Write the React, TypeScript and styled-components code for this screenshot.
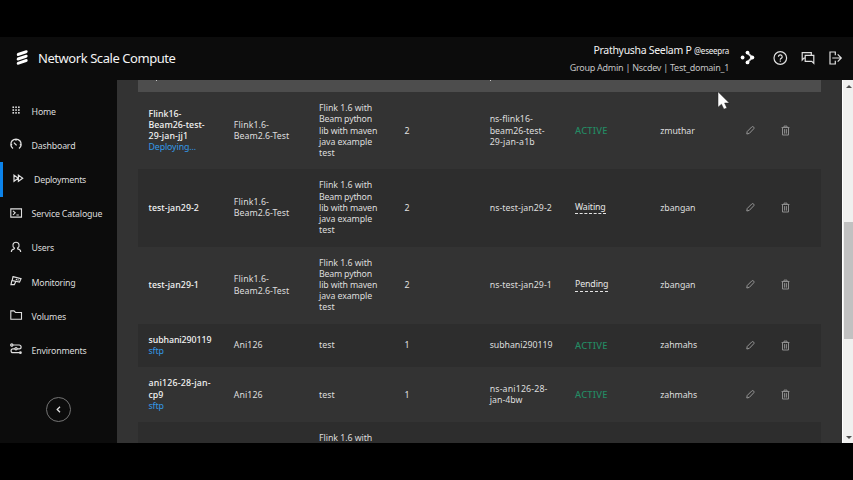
import React from "react";
import styled, { createGlobalStyle, css } from "styled-components";

const GlobalStyle = createGlobalStyle`
  * { box-sizing: border-box; }
  html, body { margin: 0; padding: 0; background: #000; overflow: hidden; }
  body { font-family: "Noto Sans", "Open Sans", sans-serif; color: #e2e2e2; }
`;

const Screen = styled.div`
  width: 853px;
  height: 480px;
  padding: 37px 0;
  display: flex;
  flex-direction: column;
  background: #000;
  position: relative;
  overflow: hidden;
`;

const Header = styled.header`
  height: 43px;
  flex: none;
  display: flex;
  align-items: center;
  padding: 0 11px 2px 16px;
  background: #0c0c0c;
`;

const Title = styled.h1`
  margin: 0 auto 0 9px;
  font-size: 13px;
  line-height: 18px;
  font-weight: 400;
  letter-spacing: -0.44px;
  color: #f4f4f4;
`;

const Account = styled.div`
  display: flex;
  flex-direction: column;
  align-items: flex-end;
  margin-right: 11px;
  padding-top: 3px;
`;

const UserName = styled.div`
  font-size: 10.5px;
  line-height: 17px;
  letter-spacing: -0.3px;
  color: #f2f2f2;
  white-space: nowrap;
`;

const Handle = styled.span`
  font-size: 8px;
  letter-spacing: -0.24px;
`;

const Role = styled.div`
  font-size: 9px;
  line-height: 17px;
  letter-spacing: -0.26px;
  color: #c4c4c4;
  white-space: nowrap;
`;

const HeaderIcons = styled.div`
  display: flex;
  align-items: center;
  gap: 13.3px;
`;

const NodesSlot = styled.div`
  display: flex;
  margin-right: 5px;
`;

const Body = styled.div`
  flex: 1;
  min-height: 0;
  display: flex;
`;

const Sidebar = styled.nav`
  width: 117px;
  flex: none;
  display: flex;
  flex-direction: column;
  background: #0c0c0c;
  padding-top: 14px;
`;

const NavItem = styled.div<{ $active?: boolean }>`
  height: 34.2px;
  flex: none;
  display: flex;
  align-items: center;
  gap: ${(p) => (p.$active ? "10px" : "9.6px")};
  padding-left: ${(p) => (p.$active ? "9px" : "10px")};
  border-left: ${(p) => (p.$active ? "3px solid #0c83ea" : "0")};
`;

const NavLabel = styled.span<{ $spacing: number }>`
  padding-top: 1px;
  font-size: 8.8px;
  line-height: 12px;
  letter-spacing: ${(p) => p.$spacing}px;
  color: #dcdcdc;
  white-space: nowrap;
`;

const CollapseButton = styled.button`
  width: 25px;
  height: 25px;
  margin: 29px 0 0 46px;
  padding: 0;
  display: flex;
  align-items: center;
  justify-content: center;
  border: 1px solid #747474;
  border-radius: 50%;
  background: transparent;
`;

const Content = styled.main`
  flex: 1;
  min-width: 0;
  padding-left: 21px;
  background: #333;
  overflow: hidden;
`;

const Table = styled.div`
  width: 682.5px;
  font-size: 8.8px;
  line-height: 11.2px;
`;

const columns = css`
  display: grid;
  grid-template-columns: repeat(7, 85.3px) 35.6px 1fr;
`;

const TableHead = styled.div`
  ${columns}
  height: 12.3px;
  background: #4d4d4d;
`;

const Descender = styled.i<{ $column: number; $offset: number }>`
  grid-column: ${(p) => p.$column};
  grid-row: 1;
  width: 1px;
  height: 1px;
  margin-left: ${(p) => p.$offset}px;
  background: #c8c8c8;
`;

const Row = styled.div<{ $dark: boolean }>`
  ${columns}
  align-items: center;
  padding: 10.7px 0 10.3px;
  background: ${(p) => (p.$dark ? "#2d2d2d" : "#333")};
`;

const Cell = styled.div`
  padding-left: 10.5px;
  padding-top: 0.2px;
  white-space: nowrap;
`;

const Line = styled.div<{ $spacing?: number; $bold?: boolean; $link?: boolean }>`
  letter-spacing: ${(p) => p.$spacing ?? 0}px;
  color: ${(p) => (p.$link ? "#3399e6" : p.$bold ? "#f4f4f4" : "#dedede")};
  font-weight: ${(p) => (p.$bold ? 500 : 400)};
`;

const Status = styled.span<{ $active: boolean }>`
  color: ${(p) => (p.$active ? "#248a64" : "#e8e8e8")};
  font-weight: ${(p) => (p.$active ? 500 : 400)};
  font-size: ${(p) => (p.$active ? "9.3px" : "8.8px")};
  letter-spacing: ${(p) => (p.$active ? "0.25px" : "-0.12px")};
  ${(p) => !p.$active && css`
    display: inline-block;
    border-bottom: 1px dashed #e4e4e4;
  `}
`;

const IconCell = styled.div`
  display: flex;
  padding-left: 10.6px;
  padding-bottom: 1.6px;
`;

const Scrollbar = styled.div`
  width: 11px;
  flex: none;
  display: flex;
  flex-direction: column;
  align-items: center;
  padding-left: 1px;
  border-left: 1px solid #fff;
  background: #f0f0ef;
`;

const Thumb = styled.div`
  width: 9px;
  height: 117px;
  margin: 134px 0 auto;
  background: #c1c1c1;
`;

const Arrow = styled.div<{ $down?: boolean }>`
  width: 0;
  height: 0;
  flex: none;
  margin: ${(p) => (p.$down ? "0 0 4px" : "5px 0 0")};
  border: 3px solid transparent;
  ${(p) => p.$down
    ? css`border-top: 3px solid #505050; border-bottom: 0;`
    : css`border-bottom: 3px solid #505050; border-top: 0;`}
`;

const Pointer = styled.svg`
  position: absolute;
  left: 717px;
  top: 91px;
`;

const Stroke = styled.svg`
  flex: none;
  fill: none;
  stroke: #e0e0e0;
  stroke-width: 1;
  overflow: visible;
`;

const Logo = () => (
  <svg width="13" height="15" viewBox="0 0 13 15" fill="#fff">
    <path d="M1.6 3.1 10 .3Q11.6 0 11.6 1.6 11.6 2.9 10.4 3.3L2.2 6Q.8 6.2.8 4.8.8 3.5 1.6 3.1Z" />
    <path d="M1.6 7.5 10 4.7Q11.6 4.4 11.6 6 11.6 7.3 10.4 7.7L2.2 10.4Q.8 10.6.8 9.2.8 7.9 1.6 7.5Z" />
    <path d="M1.6 11.9 10 9.1Q11.6 8.8 11.6 10.4 11.6 11.7 10.4 12.1L2.2 14.8Q.8 15 .8 13.6.8 12.3 1.6 11.9Z" />
  </svg>
);

const NodesIcon = () => (
  <Stroke width="15" height="15" viewBox="0 0 15 15">
    <path d="M7.3 2.8 12.3 7.5 7.3 12.2" strokeWidth="1.9" />
    <g fill="#fff" stroke="none">
      <circle cx="2.6" cy="7.5" r="1.9" />
      <circle cx="7.5" cy="2.6" r="1.9" />
      <circle cx="12.2" cy="7.5" r="2.1" />
      <circle cx="7.5" cy="12.4" r="1.9" />
    </g>
  </Stroke>
);

const HelpIcon = () => (
  <Stroke width="14" height="14" viewBox="0 0 14 14">
    <circle cx="7.3" cy="7" r="6.3" strokeWidth="1.2" />
    <path d="M5.4 5.7a1.9 1.9 0 1 1 2.8 1.7Q7.3 7.8 7.3 8.7M7.3 9.6v1.1" strokeWidth="1.2" />
  </Stroke>
);

const ChatIcon = () => (
  <Stroke width="14" height="14" viewBox="0 0 14 14">
    <path d="M4.1 7.2H3L1.2 9V1.7h9.1V4" strokeWidth="1.2" />
    <path d="M4.2 4.3h8.6v8l-2-2H4.2Z" strokeWidth="1.2" />
  </Stroke>
);

const LogoutIcon = () => (
  <Stroke width="14" height="14" viewBox="0 0 14 14">
    <path d="M7.3 4.2V1H2v12h5.3V9.8M4.3 7h8.8M9.7 3.4 13.3 7 9.7 10.6" strokeWidth="1.2" />
  </Stroke>
);

const dots = [3.2, 6, 8.8];

const navIcons: Record<string, React.ReactNode> = {
  Home: (
    <g fill="#e4e4e4" stroke="none">
      {dots.map((y) => dots.map((x) => <rect key={`${x}-${y}`} x={x - 0.75} y={y - 1.75} width="1.6" height="1.6" />))}
    </g>
  ),
  Dashboard: <path d="M3 9.5A5.2 5.2 0 1 1 9 9.5M6.6 6.4 3.9 3.6M6 .4v1.4M1 5.5h1.2M11 5.5H9.8" strokeWidth="1.3" />,
  Deployments: <path d="M2 2.1v6.2L6.2 5.2ZM6.4 2.1v6.2L10.7 5.2Z" strokeWidth="1.2" />,
  "Service Catalogue": <path d="M.8.9h10.7v8.2H.8ZM3 2.8l2.2 2L3 6.8M6.4 7h2.4" strokeWidth="1.1" />,
  Users: <path d="M4.4 6.900V6C1.900 4.500 2.600.3 6 .3S10.100 4.500 7.600 6V6.900Q10.700 7.500 10.700 9.900M4.400 6.900Q1.300 7.500 1.300 9.900" strokeWidth="1.100" />,
  Monitoring: <path d="M3 .7l8 2-1.500 3.400L2.200 4.500ZM1.800 4.600 1 8.700h3.300L5.800 5.500M6.600 2.900l-.4 1.200M8.300 3.300l-.4 1.400" strokeWidth="1.200" />,
  Volumes: <path d="M.8.9H4l1.500 1.600h6v6.800H.8Z" strokeWidth="1.1" />,
  Environments: (
    <g strokeWidth="1.2">
      <path d="M3 1h6.200a1.900 1.900 0 0 1 0 3.800H7M5 4.800H3a1.900 1.900 0 0 0 0 3.900h6" />
      <circle cx="1.800" cy="1" r="1.100" />
      <circle cx="6" cy="4.800" r="1.100" />
      <circle cx="10.400" cy="8.700" r=".8" fill="#e0e0e0" />
    </g>
  ),
};

const navItems = [
  { label: "Home", spacing: -0.2 },
  { label: "Dashboard", spacing: -0.2 },
  { label: "Deployments", spacing: -0.24, active: true },
  { label: "Service Catalogue", spacing: -0.17 },
  { label: "Users", spacing: -0.2 },
  { label: "Monitoring", spacing: -0.25 },
  { label: "Volumes", spacing: -0.16 },
  { label: "Environments", spacing: -0.2 },
];

const PencilIcon = () => (
  <Stroke width="9" height="9" viewBox="0 0 9 9">
    <path stroke="#969696" d="M.8 8l.4-2.500L5.800.9q1-.7 1.700 0t.4 1.700L3.300 7.400Z" />
  </Stroke>
);

const TrashIcon = () => (
  <Stroke width="9" height="9" viewBox="0 0 9 9">
    <path stroke="#8e8e8e" d="M.6 1.500h7.800M3 1.300V.1h3v1.200M1.500 1.700v7.300h6V1.700M3.600 3.100v4.500M5.400 3.100v4.500" />
  </Stroke>
);

type TextLine = [text: string, spacing?: number];

interface Deployment {
  name: TextLine[];
  link?: string;
  type: TextLine[];
  description: TextLine[];
  count?: string;
  namespace: TextLine[];
  status?: string;
  owner?: string;
}

const flinkType: TextLine[] = [["Flink1.6-", 0.08], ["Beam2.6-Test", 0]];
const flinkDescription: TextLine[] = [
  ["Flink 1.6 with", -0.07],
  ["Beam python", -0.22],
  ["lib with maven", -0.16],
  ["java example", -0.1],
  ["test", 0],
];

const deployments: Deployment[] = [
  {
    name: [["Flink16-", 0.02], ["Beam26-test-", 0.02], ["29-jan-jj1", 0.12]],
    link: "Deploying...",
    type: flinkType,
    description: flinkDescription,
    count: "2",
    namespace: [["ns-flink16-"], ["beam26-test-"], ["29-jan-a1b", 0.15]],
    status: "ACTIVE",
    owner: "zmuthar",
  },
  {
    name: [["test-jan29-2", 0.06]], type: flinkType, description: flinkDescription, count: "2",
    namespace: [["ns-test-jan29-2", 0.05]], status: "Waiting", owner: "zbangan",
  },
  {
    name: [["test-jan29-1", 0.06]], type: flinkType, description: flinkDescription, count: "2",
    namespace: [["ns-test-jan29-1", 0.05]], status: "Pending", owner: "zbangan",
  },
  {
    name: [["subhani290119", -0.08]], link: "sftp", type: [["Ani126", 0.06]], description: [["test", 0]], count: "1",
    namespace: [["subhani290119", -0.05]], status: "ACTIVE", owner: "zahmahs",
  },
  {
    name: [["ani126-28-jan-", 0.2], ["cp9"]], link: "sftp", type: [["Ani126", 0.06]], description: [["test", 0]], count: "1",
    namespace: [["ns-ani126-28-", 0.15], ["jan-4bw", 0.03]], status: "ACTIVE", owner: "zahmahs",
  },
];

const Lines = ({ lines, bold }: { lines: TextLine[]; bold?: boolean }) => (
  <>
    {lines.map(([text, spacing]) => (
      <Line key={text} $spacing={spacing} $bold={bold}>{text}</Line>
    ))}
  </>
);

const DeploymentRow = ({ item, dark }: { item: Deployment; dark: boolean }) => (
  <Row $dark={dark}>
    <Cell>
      <Lines lines={item.name} bold />
      {item.link && <Line $link $spacing={-0.12}>{item.link}</Line>}
    </Cell>
    <Cell><Lines lines={item.type} /></Cell>
    <Cell><Lines lines={item.description} /></Cell>
    <Cell>{item.count}</Cell>
    <Cell><Lines lines={item.namespace} /></Cell>
    <Cell>{item.status && <Status $active={item.status === "ACTIVE"}>{item.status}</Status>}</Cell>
    <Cell><Lines lines={[[item.owner ?? "", -0.08]]} /></Cell>
    <IconCell>{item.owner && <PencilIcon />}</IconCell>
    <IconCell>{item.owner && <TrashIcon />}</IconCell>
  </Row>
);

export default function App() {
  return (
    <>
      <GlobalStyle />
      <Screen>
        <Header>
          <Logo />
          <Title>Network Scale Compute</Title>
          <Account>
            <UserName>Prathyusha Seelam P <Handle>@eseepra</Handle></UserName>
            <Role>Group Admin | Nscdev | Test_domain_1</Role>
          </Account>
          <HeaderIcons>
            <NodesSlot><NodesIcon /></NodesSlot>
            <HelpIcon />
            <ChatIcon />
            <LogoutIcon />
          </HeaderIcons>
        </Header>
        <Body>
          <Sidebar>
            {navItems.map((item) => (
              <NavItem key={item.label} $active={item.active}>
                <Stroke width="12" height="12" viewBox="0 0 12 12">{navIcons[item.label]}</Stroke>
                <NavLabel $spacing={item.spacing}>{item.label}</NavLabel>
              </NavItem>
            ))}
            <CollapseButton aria-label="Collapse menu">
              <Stroke width="5" height="7" viewBox="0 0 5 7"><path d="M4 .7 1.2 3.5 4 6.3" strokeWidth="1.3" /></Stroke>
            </CollapseButton>
          </Sidebar>
          <Content>
            <Table>
              <TableHead>
                <Descender $column={1} $offset={18} />
                <Descender $column={5} $offset={11} />
              </TableHead>
              {deployments.map((item, i) => (
                <DeploymentRow key={item.name[0][0]} item={item} dark={i % 2 === 1} />
              ))}
              <DeploymentRow item={{ name: [], type: [], description: flinkDescription.slice(0, 1), namespace: [] }} dark />
            </Table>
          </Content>
          <Scrollbar>
            <Arrow />
            <Thumb />
            <Arrow $down />
          </Scrollbar>
        </Body>
        <Pointer width="13" height="19" viewBox="0 0 13 19">
          <path d="M1 .8v15.400l3.500-3 2.400 5 3-1.300-2.300-4.900H12.300Z" fill="#fff" stroke="#222" strokeWidth=".5" />
        </Pointer>
      </Screen>
    </>
  );
}
